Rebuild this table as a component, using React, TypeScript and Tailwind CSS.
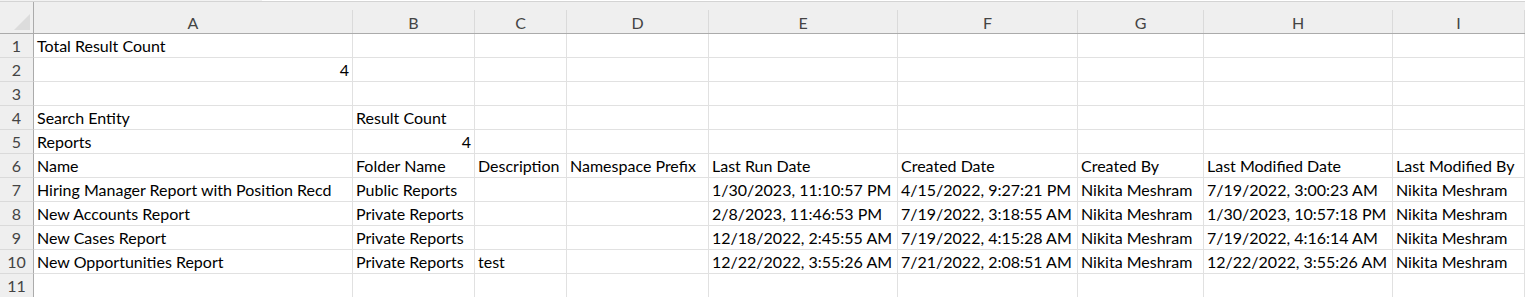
const columns = ["A", "B", "C", "D", "E", "F", "G", "H", "I"];

const colWidths = [
  "w-[319px]",
  "w-[122px]",
  "w-[92px]",
  "w-[142px]",
  "w-[189px]",
  "w-[180px]",
  "w-[126px]",
  "w-[189px]",
  "w-[132px]",
];

type Cell = string | { v: string; right: true };

const rows: Cell[][] = [
  ["Total Result Count"],
  [{ v: "4", right: true }],
  [],
  ["Search Entity", "Result Count"],
  ["Reports", { v: "4", right: true }],
  [
    "Name",
    "Folder Name",
    "Description",
    "Namespace Prefix",
    "Last Run Date",
    "Created Date",
    "Created By",
    "Last Modified Date",
    "Last Modified By",
  ],
  [
    "Hiring Manager Report with Position Recd",
    "Public Reports",
    "",
    "",
    "1/30/2023, 11:10:57 PM",
    "4/15/2022, 9:27:21 PM",
    "Nikita Meshram",
    "7/19/2022, 3:00:23 AM",
    "Nikita Meshram",
  ],
  [
    "New Accounts Report",
    "Private Reports",
    "",
    "",
    "2/8/2023, 11:46:53 PM",
    "7/19/2022, 3:18:55 AM",
    "Nikita Meshram",
    "1/30/2023, 10:57:18 PM",
    "Nikita Meshram",
  ],
  [
    "New Cases Report",
    "Private Reports",
    "",
    "",
    "12/18/2022, 2:45:55 AM",
    "7/19/2022, 4:15:28 AM",
    "Nikita Meshram",
    "7/19/2022, 4:16:14 AM",
    "Nikita Meshram",
  ],
  [
    "New Opportunities Report",
    "Private Reports",
    "test",
    "",
    "12/22/2022, 3:55:26 AM",
    "7/21/2022, 2:08:51 AM",
    "Nikita Meshram",
    "12/22/2022, 3:55:26 AM",
    "Nikita Meshram",
  ],
  [],
];

export default function App() {
  return (
    <div
      className="h-[297px] w-[1525px] overflow-hidden bg-white text-[16px] text-black"
      style={{ fontFamily: "Lato, 'Liberation Sans', sans-serif" }}
    >
      {/* formula bar edge */}
      <div className="flex h-[2px] border-b border-[#d4d4d4]">
        <div className="w-[262px] bg-[#f2f2f2]" />
        <div className="flex-1 bg-white" />
      </div>

      {/* column headers */}
      <div className="flex h-[32px]">
        <div className="flex w-[34px] items-end justify-end border-r border-b border-[#ababab] bg-[#efefef] pr-[3px] pb-[3px]">
          <svg width="16" height="16" viewBox="0 0 16 16">
            <polygon points="16,0 16,16 0,16" fill="#dcdcdc" />
          </svg>
        </div>
        {columns.map((c, i) => (
          <div
            key={c}
            className={`flex flex-col border-b border-[#ababab] bg-[#efefef] pt-2 ${colWidths[i]}`}
          >
            <div className="flex flex-1 items-end justify-center border-r border-[#dadada] leading-[20px] text-[#444]">
              {c}
            </div>
          </div>
        ))}
      </div>

      {/* rows */}
      {rows.map((row, r) => (
        <div key={r} className="flex h-[24px]">
          <div className="flex w-[34px] items-center justify-center border-r border-b border-r-[#ababab] border-b-[#dadada] bg-[#efefef] leading-[23px] text-[#444]">
            {r + 1}
          </div>
          {columns.map((c, i) => {
            const cell = row[i];
            const right = typeof cell === "object";
            const text = typeof cell === "object" ? cell.v : cell ?? "";
            return (
              <div
                key={c}
                className={[
                  "flex items-center overflow-hidden whitespace-nowrap border-r border-b border-[#e1e1e1] leading-[23px]",
                  right ? "justify-end pr-[3px]" : "pl-[3px]",
                  colWidths[i],
                ].join(" ")}
              >
                {text}
              </div>
            );
          })}
        </div>
      ))}
    </div>
  );
}
